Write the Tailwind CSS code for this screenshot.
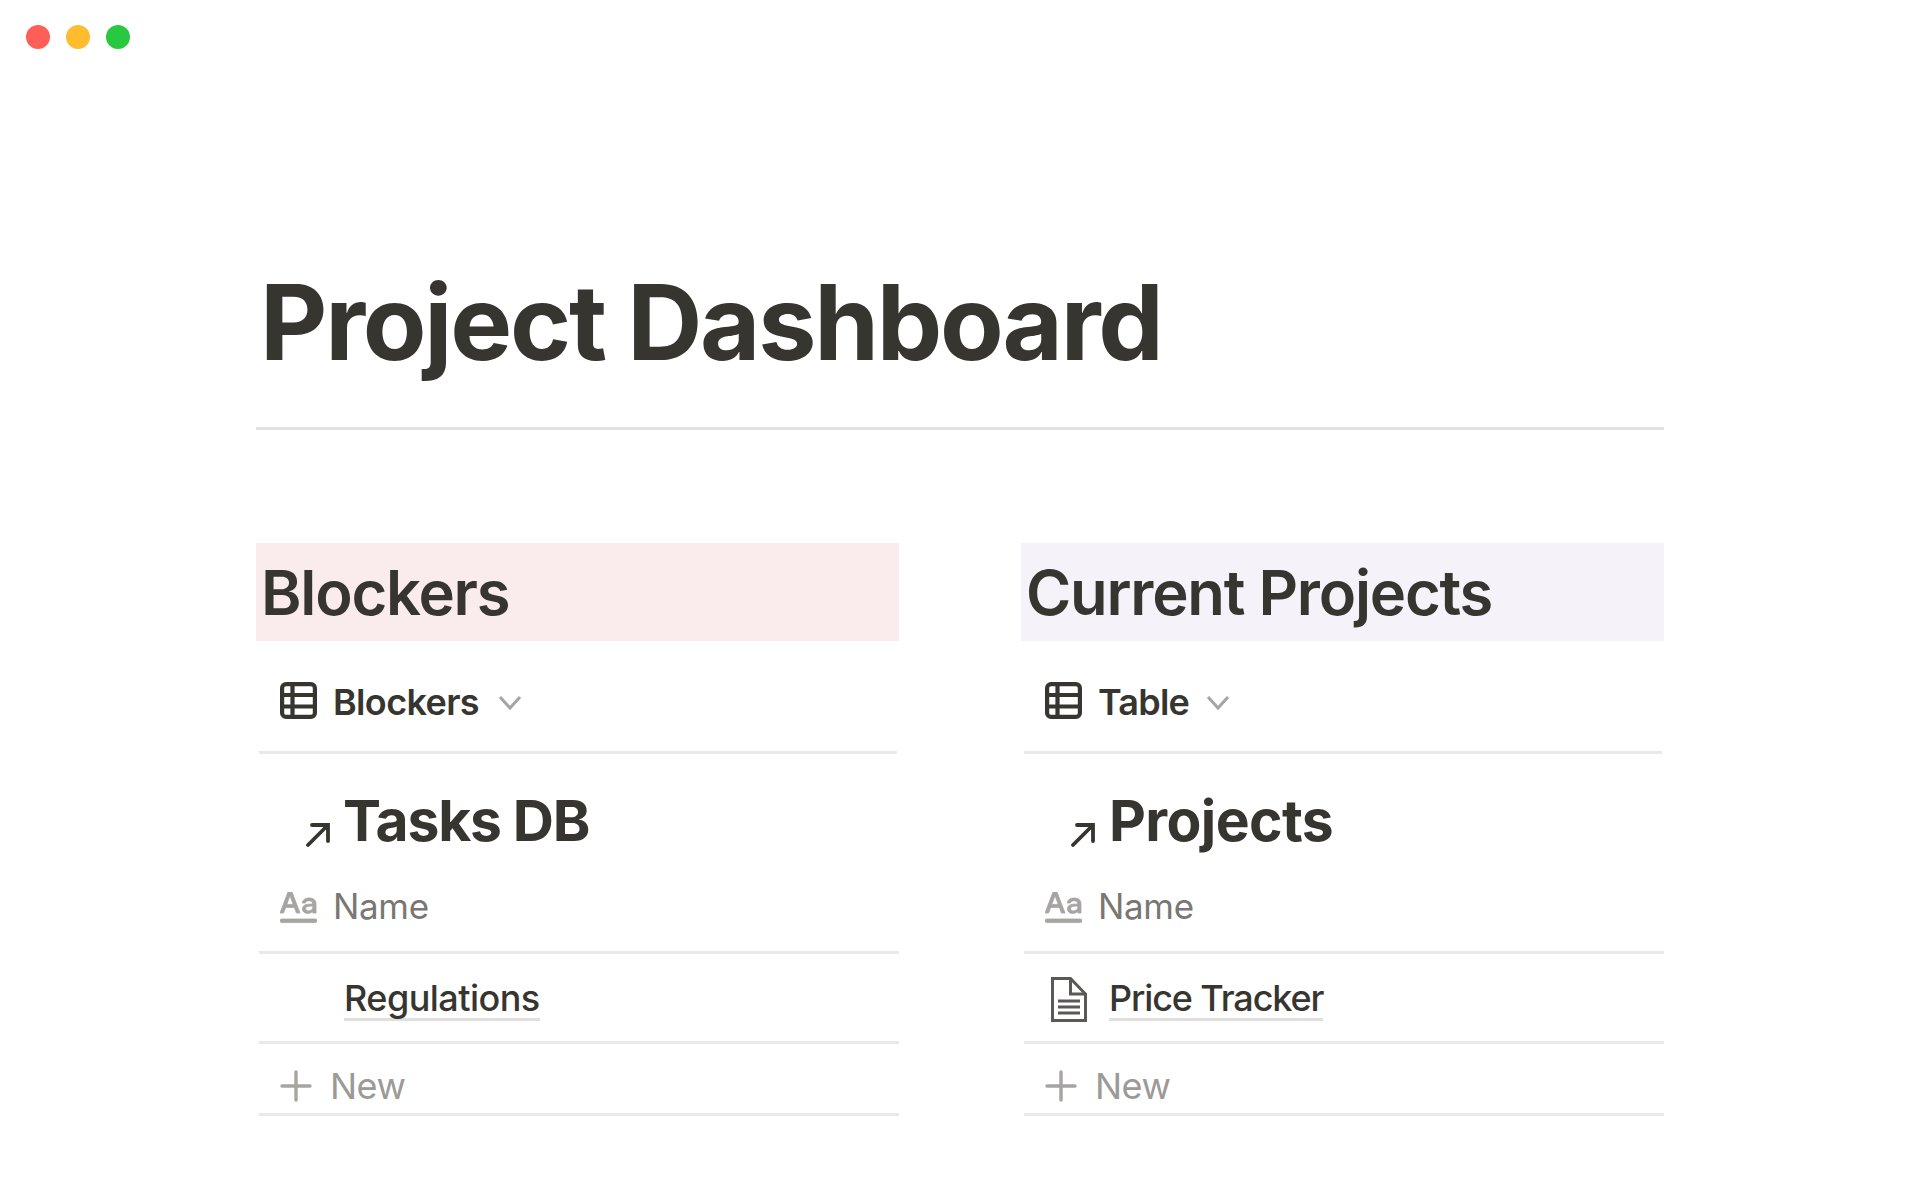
<!DOCTYPE html>
<html lang="en">
<head>
  <meta charset="UTF-8" />
  <title>Project Dashboard</title>
  <script src="https://cdn.jsdelivr.net/npm/@tailwindcss/browser@4"></script>
</head>
<body class="bg-white h-[1200px] overflow-hidden font-['Inter',sans-serif] text-[#37352f]">

  <!-- window controls -->
  <div class="flex gap-4 pl-[26px] pt-[25px]">
    <div class="w-6 h-6 rounded-full bg-[#ff5f57]"></div>
    <div class="w-6 h-6 rounded-full bg-[#febc2e]"></div>
    <div class="w-6 h-6 rounded-full bg-[#28c840]"></div>
  </div>

  <main class="mx-[256px] w-[1408px]">
    <h1 class="mt-[201px] pl-[4px] h-[145px] text-[104px] leading-[145px] font-bold tracking-[-0.0215em]">Project Dashboard</h1>
    <div class="mt-[32px] h-[3px] bg-[#e3e3e1]"></div>

    <div class="mt-[113px] grid grid-cols-[643px_643px] gap-x-[122px]">

      <!-- Blockers -->
      <section>
        <h2 class="h-[98px] pl-[5px] bg-[#faebec] text-[61.5px] leading-[100px] font-semibold tracking-[-0.02em]">Blockers</h2>
        <div class="ml-[3px] mr-[2px] h-[113px] border-b-[3px] border-[#e9e9e7] flex items-center pl-[21px] pt-[11px]">
          <svg class="w-[37px] h-[37px] -mt-[3px] text-[#37352f]" viewBox="0 0 37 37" fill="none" stroke="currentColor" stroke-width="4.200">
            <rect x="2.100" y="2.100" width="32.800" height="32.800" rx="4"/>
            <path d="M2.100 13h32.800M2.100 24.500h32.800M12.500 2.100v32.800"/>
          </svg>
          <span class="ml-[16px] text-[36px] leading-none font-semibold tracking-[-0.018em]">Blockers</span>
          <svg class="ml-[19px] mt-[2px] w-[24px] h-[16px] text-[#a6a5a1]" viewBox="0 0 24 16" fill="none" stroke="currentColor" stroke-width="3">
            <path d="M2 2l10 11L22 2"/>
          </svg>
        </div>
        <div class="ml-[3px] h-[104px] flex items-center pl-[46px] pt-[28px]">
          <svg class="w-[25px] h-[25px] mt-[28px] text-[#37352f]" viewBox="0 0 25 25" fill="none" stroke="currentColor" stroke-width="3.800" stroke-linecap="round">
            <path d="M3 23L22 4M7 3h16v16"/>
          </svg>
          <span class="ml-[13px] text-[57px] leading-none font-bold tracking-[-0.022em]">Tasks DB</span>
        </div>
        <div class="ml-[3px] h-[96px] border-b-[3px] border-[#e9e9e7] flex items-center pl-[21px] pt-[4px]">
          <svg class="w-[37px] h-[32px] mt-[2px] text-[#a6a5a1]" viewBox="0 0 37 32" fill="currentColor" stroke="currentColor" stroke-width="0.8">
            <path d="M0 21L8 0h4l8 21h-3.600l-2-5.600H5.600l-2 5.600H0zM6.800 12.400h6.400L10 3.600 6.800 12.400z"/>
            <path d="M29 6c4.500 0 7 2 7 6v9h-3.200v-2c-1 1.500-2.800 2.400-5 2.400-3.200 0-5.300-1.800-5.300-4.500 0-2.900 2.200-4.500 6-4.700l4.200-.2V12c0-2-1.300-3.200-3.700-3.200-2 0-3.300.8-3.700 2.200h-3C22.700 7.800 25.300 6 29 6zm3.800 9.600V14l-3.800.2c-2.200.1-3.400 1-3.400 2.400s1.200 2.300 3 2.300c2.400 0 4.200-1.400 4.200-3.300z"/>
            <rect x="0" y="27" width="37" height="3.600" rx="1.800"/>
          </svg>
          <span class="ml-[16px] text-[35px] leading-none text-[#787774] tracking-[-0.01em]">Name</span>
        </div>
        <div class="ml-[3px] h-[90px] border-b-[3px] border-[#e9e9e7] pl-[85px] pt-[4px] flex items-center">
          <span class="text-[36px] leading-[39px] font-medium border-b-[3px] border-[#dfdfdd] tracking-[-0.015em]">Regulations</span>
        </div>
        <div class="ml-[3px] h-[72px] border-b-[3px] border-[#e9e9e7] flex items-center pl-[21px] pt-[14px]">
          <svg class="w-[32px] h-[32px] text-[#a6a5a1]" viewBox="0 0 32 32" fill="none" stroke="currentColor" stroke-width="3.400" stroke-linecap="round">
            <path d="M16 2v28M2 16h28"/>
          </svg>
          <span class="ml-[18px] text-[36px] leading-none text-[#9b9a97] tracking-[-0.015em]">New</span>
        </div>
      </section>

      <!-- Current Projects -->
      <section>
        <h2 class="h-[98px] pl-[5px] bg-[#f5f3f9] text-[61.5px] leading-[100px] font-semibold tracking-[-0.02em]">Current Projects</h2>
        <div class="ml-[3px] mr-[2px] h-[113px] border-b-[3px] border-[#e9e9e7] flex items-center pl-[21px] pt-[11px]">
          <svg class="w-[37px] h-[37px] -mt-[3px] text-[#37352f]" viewBox="0 0 37 37" fill="none" stroke="currentColor" stroke-width="4.200">
            <rect x="2.100" y="2.100" width="32.800" height="32.800" rx="4"/>
            <path d="M2.100 13h32.800M2.100 24.500h32.800M12.500 2.100v32.800"/>
          </svg>
          <span class="ml-[16px] text-[36px] leading-none font-semibold tracking-[-0.022em]">Table</span>
          <svg class="ml-[17px] mt-[2px] w-[24px] h-[16px] text-[#a6a5a1]" viewBox="0 0 24 16" fill="none" stroke="currentColor" stroke-width="3">
            <path d="M2 2l10 11L22 2"/>
          </svg>
        </div>
        <div class="ml-[3px] h-[104px] flex items-center pl-[46px] pt-[28px]">
          <svg class="w-[25px] h-[25px] mt-[28px] text-[#37352f]" viewBox="0 0 25 25" fill="none" stroke="currentColor" stroke-width="3.800" stroke-linecap="round">
            <path d="M3 23L22 4M7 3h16v16"/>
          </svg>
          <span class="ml-[14px] text-[57px] leading-none font-bold tracking-[-0.011em]">Projects</span>
        </div>
        <div class="ml-[3px] h-[96px] border-b-[3px] border-[#e9e9e7] flex items-center pl-[21px] pt-[4px]">
          <svg class="w-[37px] h-[32px] mt-[2px] text-[#a6a5a1]" viewBox="0 0 37 32" fill="currentColor" stroke="currentColor" stroke-width="0.8">
            <path d="M0 21L8 0h4l8 21h-3.600l-2-5.600H5.600l-2 5.600H0zM6.800 12.400h6.400L10 3.600 6.800 12.400z"/>
            <path d="M29 6c4.500 0 7 2 7 6v9h-3.200v-2c-1 1.500-2.800 2.400-5 2.400-3.200 0-5.300-1.800-5.300-4.500 0-2.900 2.200-4.500 6-4.700l4.200-.2V12c0-2-1.300-3.200-3.700-3.200-2 0-3.300.8-3.700 2.200h-3C22.700 7.800 25.300 6 29 6zm3.800 9.600V14l-3.800.2c-2.200.1-3.400 1-3.400 2.400s1.200 2.300 3 2.300c2.400 0 4.200-1.400 4.200-3.300z"/>
            <rect x="0" y="27" width="37" height="3.600" rx="1.800"/>
          </svg>
          <span class="ml-[16px] text-[35px] leading-none text-[#787774] tracking-[-0.01em]">Name</span>
        </div>
        <div class="ml-[3px] h-[90px] border-b-[3px] border-[#e9e9e7] pl-[27px] pt-[4px] flex items-center">
          <svg class="w-[36px] h-[45px] mr-[22px] text-[#5a5955]" viewBox="0 0 36 45" fill="none" stroke="currentColor" stroke-width="3">
            <path d="M1.500 1.500h18L34.500 17v26.500h-33z"/>
            <path d="M19.500 1.500V17h15"/>
            <path d="M7 24h22M7 30h22M7 36h22"/>
          </svg>
          <span class="text-[36px] leading-[39px] font-medium border-b-[3px] border-[#dfdfdd] tracking-[-0.031em]">Price Tracker</span>
        </div>
        <div class="ml-[3px] h-[72px] border-b-[3px] border-[#e9e9e7] flex items-center pl-[21px] pt-[14px]">
          <svg class="w-[32px] h-[32px] text-[#a6a5a1]" viewBox="0 0 32 32" fill="none" stroke="currentColor" stroke-width="3.400" stroke-linecap="round">
            <path d="M16 2v28M2 16h28"/>
          </svg>
          <span class="ml-[18px] text-[36px] leading-none text-[#9b9a97] tracking-[-0.015em]">New</span>
        </div>
      </section>

    </div>
  </main>
</body>
</html>
